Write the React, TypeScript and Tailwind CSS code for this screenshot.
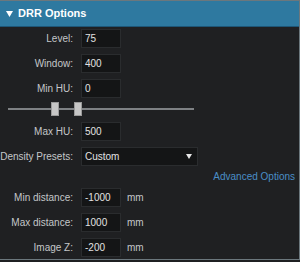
import React from "react";

const font = { fontFamily: '"Liberation Sans", Arial, sans-serif' };

function Row({ label, value, unit }: { label: string; value: string; unit?: string }) {
  return (
    <div className="flex items-center h-[19px]">
      <div className="w-[73px] text-right text-[10px] text-[#c4c7c9] leading-none">{label}</div>
      <div className="ml-[8px] w-[40px] h-[19px] bg-[#141516] border border-[#2a2c2e] flex items-center pl-[3px] text-[10px] text-[#e2e2e2] leading-none">
        {value}
      </div>
      {unit && <div className="ml-[6px] text-[10px] text-[#c4c7c9] leading-none">{unit}</div>}
    </div>
  );
}

export default function App() {
  return (
    <div className="w-[300px] h-[262px] bg-[#1f2022]" style={font}>
      <div className="w-[300px] h-[260px] border-t border-r border-b border-[#6b777d] bg-[#1f2022] flex flex-col">
        <div className="h-[26px] bg-[#2e79a0] border-b border-[#1d5677] flex items-center pl-[6px]">
          <svg width="7" height="6" viewBox="0 0 7 6" className="mr-[5px]">
            <polygon points="0,0 7,0 3.5,6" fill="#ffffff" />
          </svg>
          <span className="text-[11px] font-bold text-white leading-none">DRR Options</span>
        </div>
        <div className="flex flex-col pt-[2px]">
          <div className="flex flex-col gap-[6px]">
            <Row label="Level:" value="75" />
            <Row label="Window:" value="400" />
            <Row label="Min HU:" value="0" />
          </div>
          <div className="relative h-[14px] mt-[4px] ml-[8px] w-[186px] flex items-center">
            <div className="w-full h-[2px] bg-[#7e8184]" />
            <div className="absolute left-[43px] top-0 w-[8px] h-[14px] bg-[#c6c6c6] border border-[#9a9a9a]" />
            <div className="absolute left-[66px] top-0 w-[8px] h-[14px] bg-[#c6c6c6] border border-[#9a9a9a]" />
          </div>
          <div className="mt-[6px] flex flex-col gap-[6px]">
            <Row label="Max HU:" value="500" />
            <div className="flex items-center h-[19px]">
              <div className="w-[73px] text-right text-[10px] text-[#c4c7c9] leading-none whitespace-nowrap">Density Presets:</div>
              <div className="ml-[8px] w-[117px] h-[19px] bg-[#141516] border border-[#2a2c2e] flex items-center justify-between pl-[3px] pr-[5px] text-[10px] text-[#e2e2e2] leading-none">
                <span>Custom</span>
                <svg width="6" height="5" viewBox="0 0 6 5">
                  <polygon points="0,0 6,0 3,5" fill="#e8e8e8" />
                </svg>
              </div>
            </div>
          </div>
          <div className="h-[22px] flex items-center justify-end pr-[4px] text-[10px] text-[#4a8ec6] leading-none">
            Advanced Options
          </div>
          <div className="flex flex-col gap-[6px]">
            <Row label="Min distance:" value="-1000" unit="mm" />
            <Row label="Max distance:" value="1000" unit="mm" />
            <Row label="Image Z:" value="-200" unit="mm" />
          </div>
        </div>
      </div>
    </div>
  );
}
